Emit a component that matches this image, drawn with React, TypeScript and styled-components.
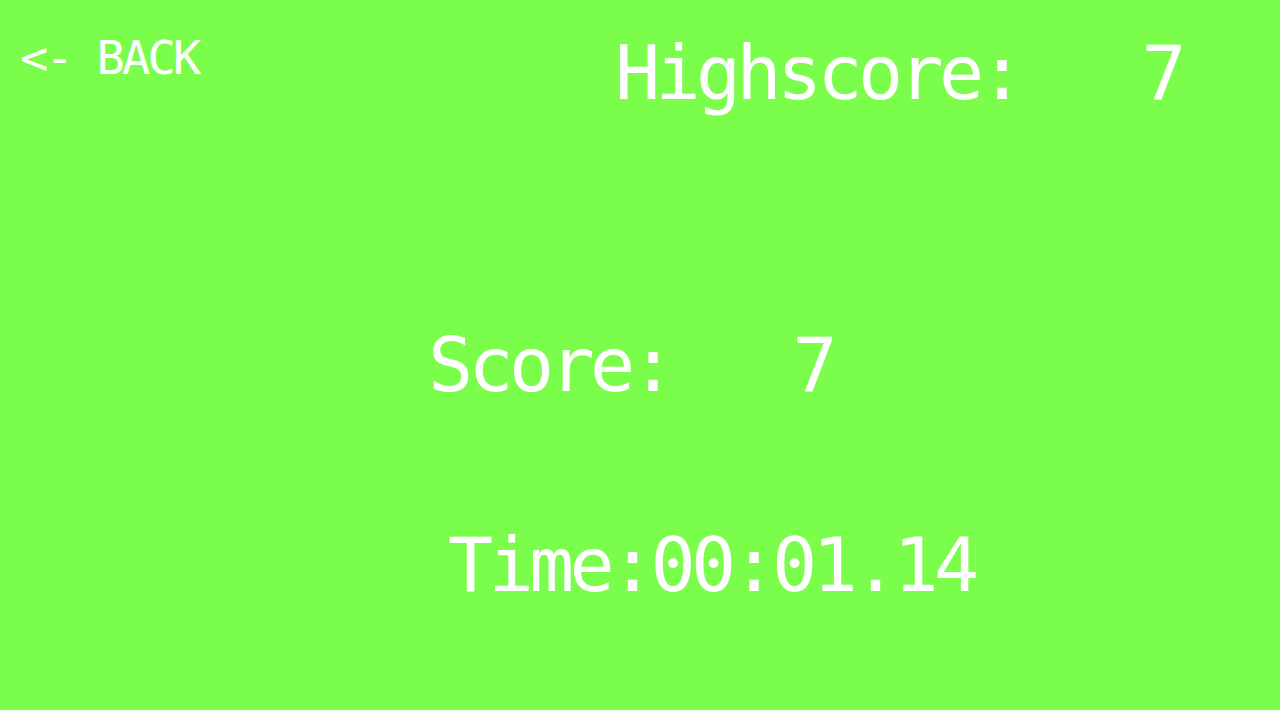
import React from "react";
import styled, { createGlobalStyle } from "styled-components";

const Global = createGlobalStyle`
  html, body { margin: 0; padding: 0; background: #7bfd4c; }
  body { font-family: "DejaVu Sans Mono", "Liberation Mono", monospace; }
`;

const Screen = styled.div`
  width: 1280px;
  min-height: 710px;
  background: #7bfd4c;
  color: #ffffff;
  display: flex;
  flex-direction: column;
  font-family: "DejaVu Sans Mono", "Liberation Mono", monospace;
  overflow: hidden;
`;

const Header = styled.div`
  display: flex;
  justify-content: space-between;
  align-items: flex-start;
  padding: 34px 98px 0 20px;
`;

const BackButton = styled.button`
  background: none;
  border: none;
  padding: 0;
  margin: 0;
  color: #ffffff;
  font-family: inherit;
  font-size: 47px;
  line-height: 47px;
  letter-spacing: -2.8px;
  white-space: pre;
  cursor: pointer;
`;

const BigText = styled.div<{ $indent?: number; $top?: number }>`
  font-size: 75px;
  line-height: 75px;
  letter-spacing: -4.65px;
  white-space: pre;
  padding-left: ${(p) => p.$indent ?? 0}px;
  margin-top: ${(p) => p.$top ?? 0}px;
`;

export default function App() {
  return (
    <Screen>
      <Global />
      <Header>
        <BackButton>{"<- BACK"}</BackButton>
        <BigText $top={2}>{"Highscore:   7"}</BigText>
      </Header>
      <BigText $indent={428} $top={217}>{"Score:   7"}</BigText>
      <BigText $indent={448} $top={125}>{"Time:00:01.14"}</BigText>
    </Screen>
  );
}
